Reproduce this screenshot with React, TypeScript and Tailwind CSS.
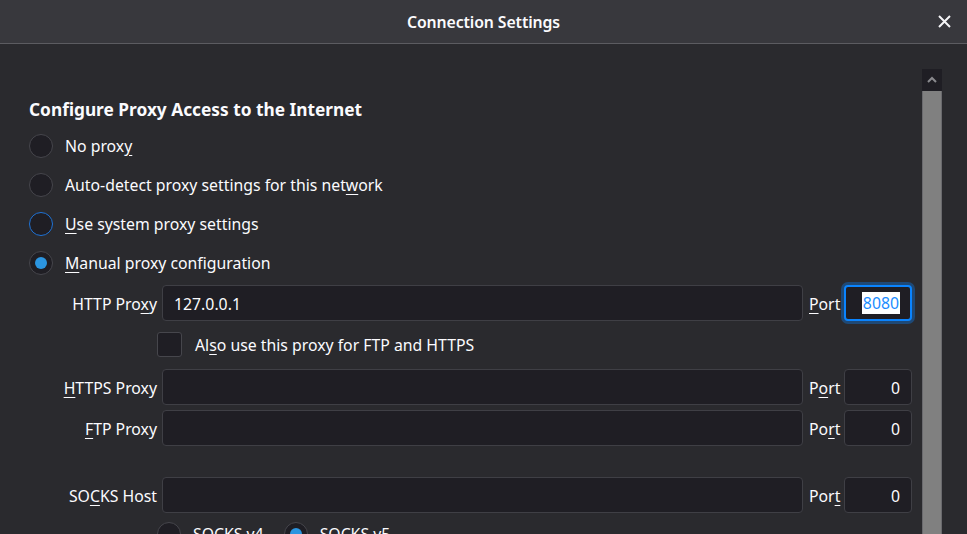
import React from 'react';

const font = { fontFamily: '"Noto Sans", "Open Sans", sans-serif' };

function U({ children }: { children: React.ReactNode }) {
  return <span className="underline underline-offset-[3px] decoration-1">{children}</span>;
}

function Radio({ checked, focus }: { checked?: boolean; focus?: boolean }) {
  return (
    <div
      className={`w-[24px] h-[24px] shrink-0 rounded-full bg-[#1f1e24] flex items-center justify-center border ${
        focus ? 'border-[#1f73d6] border-[1.5px]' : 'border-[#46464c]'
      }`}
    >
      {checked && <div className="w-[12px] h-[12px] rounded-full bg-[#2b95e0]" />}
    </div>
  );
}

function TextBox({ value, className = '' }: { value?: string; className?: string }) {
  return (
    <div className={`h-[36px] rounded-[4px] bg-[#1f1e24] border border-[#3f3f45] flex items-center px-[11px] pt-[1px] ${className}`}>
      {value}
    </div>
  );
}

function ProxyRow({ label, port, portLabel, focused }: { label: React.ReactNode; port: string; portLabel: React.ReactNode; focused?: boolean }) {
  return (
    <div className="flex items-center h-[36px]">
      <div className="w-[128px] text-right shrink-0 pt-[1px]">{label}</div>
      <TextBox value={port === '8080' ? '127.0.0.1' : ''} className="ml-[5px] flex-1" />
      <div className="w-[41px] pl-[6px] shrink-0 pt-[1px]">{portLabel}</div>
      {focused ? (
        <div className="w-[68px] h-[36px] rounded-[4px] bg-[#1f1e24] border-2 border-[#0a84ff] ring-[3px] ring-[#0a84ff]/35 flex items-center justify-end pr-[10px]">
          <span className="bg-white text-[#1a8cff] leading-[22px] px-[1px]">8080</span>
        </div>
      ) : (
        <TextBox value={port} className="w-[68px] justify-end !pr-[11px]" />
      )}
    </div>
  );
}

export default function App() {
  return (
    <div className="w-[967px] h-[534px] overflow-hidden bg-[#2a2a2e] text-[#fbfbfe] text-[15.8px] leading-[20px]" style={font}>
      {/* title bar */}
      <div className="h-[44px] bg-[#38383d] border-b border-[#5c5c61] flex items-center justify-center relative">
        <span className="font-semibold text-[15.8px] tracking-[-0.1px]">Connection Settings</span>
        <svg className="absolute left-[938px] top-[15px]" width="13" height="13" viewBox="0 0 13 13">
          <path d="M1 1L12 12M12 1L1 12" stroke="#f5f5f7" strokeWidth="2" />
        </svg>
      </div>

      <div className="flex h-[490px]">
        <div className="flex-1 pl-[29px] pr-[10px] flex flex-col">
          <h1 className="mt-[54px] h-[24px] leading-[24px] text-[17.3px] font-bold">Configure Proxy Access to the Internet</h1>

          <div className="mt-[4px] flex flex-col">
            <div className="h-[39px] flex items-center gap-[12px]">
              <Radio />
              <span>No prox<U>y</U></span>
            </div>
            <div className="h-[39px] flex items-center gap-[12px]">
              <Radio />
              <span>Auto-detect proxy settings for this net<U>w</U>ork</span>
            </div>
            <div className="h-[39px] flex items-center gap-[12px]">
              <Radio focus />
              <span><U>U</U>se system proxy settings</span>
            </div>
            <div className="h-[39px] flex items-center gap-[12px]">
              <Radio checked />
              <span><U>M</U>anual proxy configuration</span>
            </div>
          </div>

          <div className="mt-[3px]">
            <ProxyRow label={<>HTTP Pro<U>x</U>y</>} port="8080" portLabel={<><U>P</U>ort</>} focused />
          </div>

          <div className="mt-[11px] h-[25px] flex items-center pl-[128px] gap-[13px]">
            <div className="w-[25px] h-[25px] rounded-[3px] bg-[#1f1e24] border border-[#46464c]" />
            <span>Al<U>s</U>o use this proxy for FTP and HTTPS</span>
          </div>

          <div className="mt-[12px]">
            <ProxyRow label={<><U>H</U>TTPS Proxy</>} port="0" portLabel={<>P<U>o</U>rt</>} />
          </div>
          <div className="mt-[5px]">
            <ProxyRow label={<><U>F</U>TP Proxy</>} port="0" portLabel={<>Po<U>r</U>t</>} />
          </div>
          <div className="mt-[31px]">
            <ProxyRow label={<>SO<U>C</U>KS Host</>} port="0" portLabel={<>Por<U>t</U></>} />
          </div>

          <div className="mt-[9px] pl-[128px] flex items-center">
            <Radio />
            <span className="ml-[12px]">SOCKS v<U>4</U></span>
            <div className="ml-[20px]"><Radio checked /></div>
            <span className="ml-[12px]">SOCKS <U>v</U>5</span>
          </div>
        </div>

        {/* scrollbar */}
        <div className="w-[20px] mr-[25px] mt-[25px] flex flex-col shrink-0">
          <div className="h-[22px] bg-[#1f1e24] flex items-center justify-center">
            <svg width="10" height="8" viewBox="0 0 10 8">
              <path d="M1 6L5 2L9 6" stroke="#8a8a8e" strokeWidth="2" fill="none" />
            </svg>
          </div>
          <div className="flex-1 bg-[#808080] border-x border-[#6a6a6e]" />
        </div>
      </div>
    </div>
  );
}
